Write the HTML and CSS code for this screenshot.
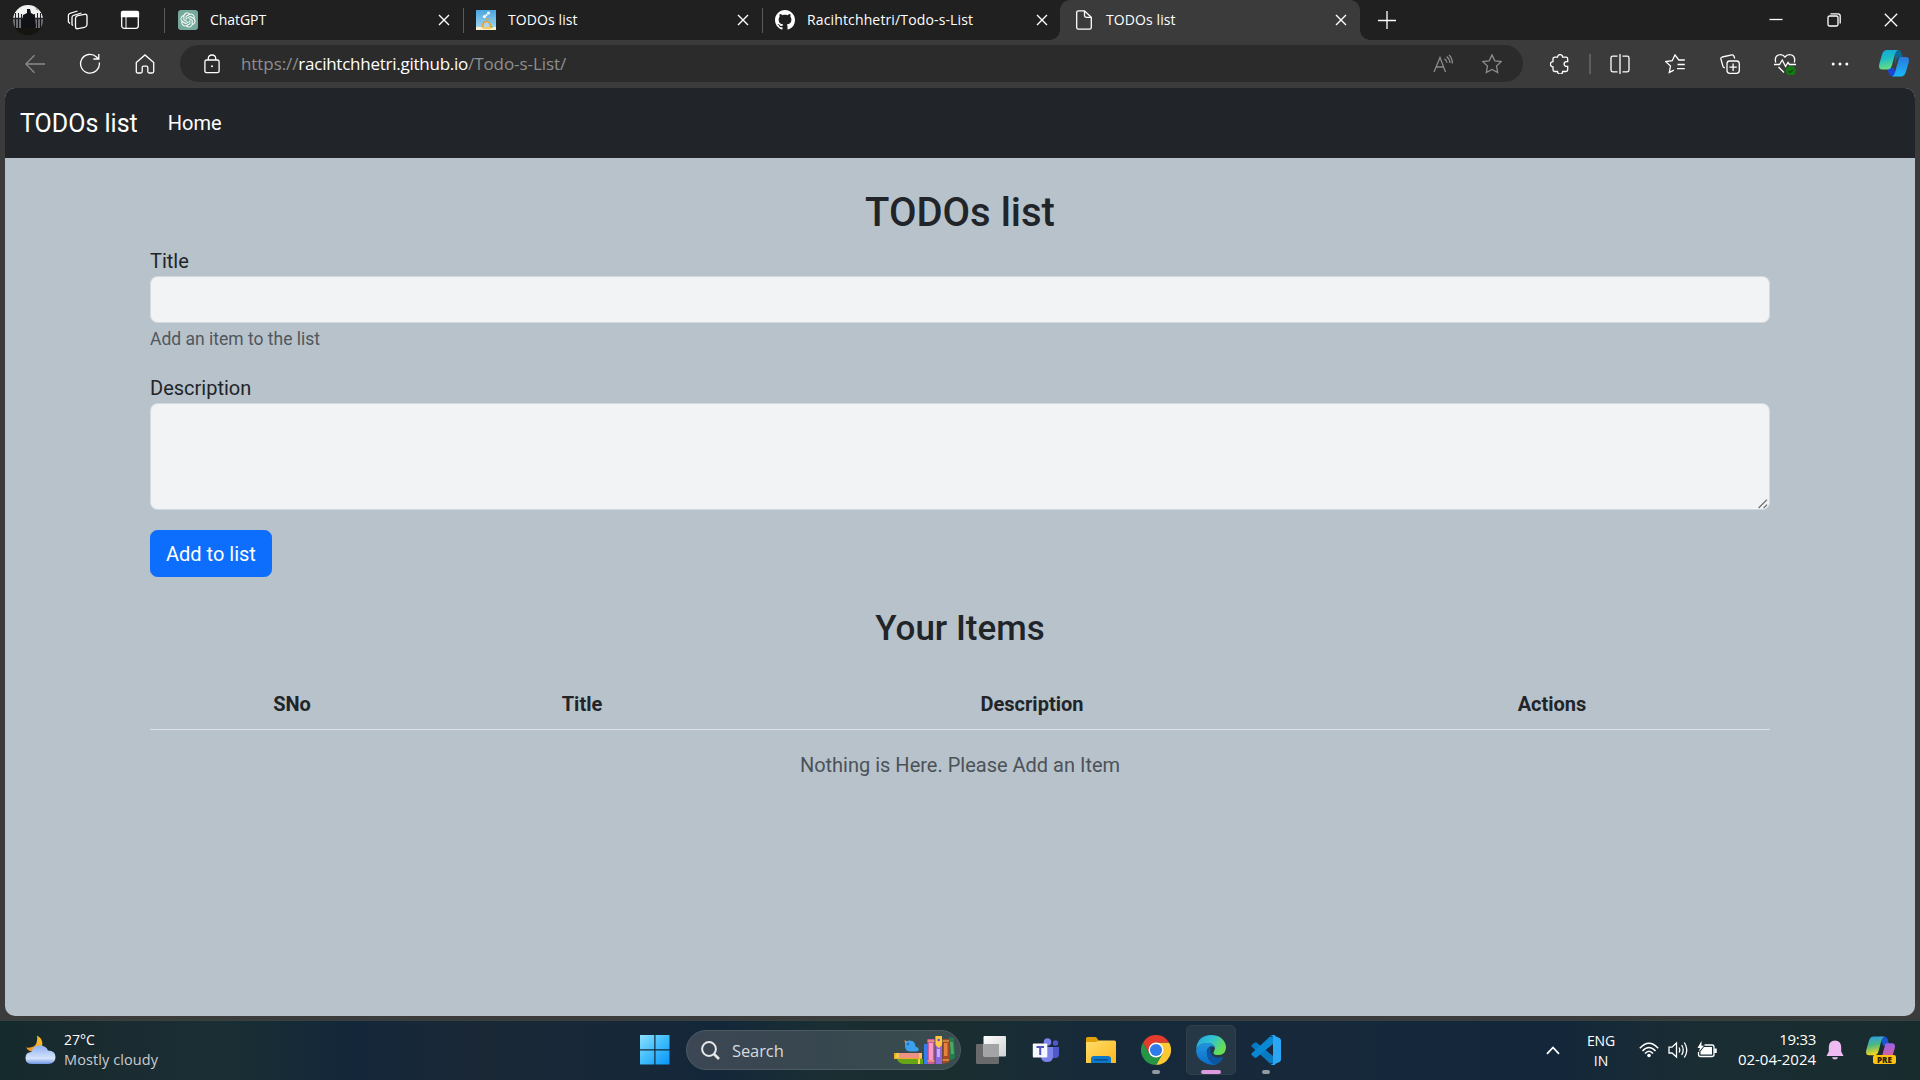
FILE: index.html
```html
<!DOCTYPE html>
<html lang="en">
<head>
<meta charset="utf-8">
<title>TODOs list</title>
<link rel="stylesheet" href="styles.css">
</head>
<body>
<div class="screen">
  <header class="tabstrip">
    <div class="strip-tools">
      <svg class="avatar" width="30" height="30" viewBox="0 0 30 30">
        <defs><clipPath id="av"><circle cx="15" cy="15" r="15"/></clipPath></defs>
        <g clip-path="url(#av)">
          <rect width="30" height="30" fill="#15151a"/>
          <rect width="30" height="13" fill="#f1f3f2"/>
          <path d="M1 13v10M4 13v10M7 13v10M23 13v10M26 13v10M29 13v10" stroke="#b9b9bf" stroke-width="1.1"/>
          <path d="M2.500 8v6M5.500 8v6M8.500 9v5M21.500 9v5M24.500 8v6M27.500 8v6" stroke="#24242a" stroke-width="1.1"/>
          <path d="M0 13.500h11M20 13.500h10" stroke="#24242a" stroke-width="1.400"/>
          <path d="M22 1l2 4 2-1" stroke="#9b9b93" fill="none"/>
          <path d="M14 4h3l1 4 3.500 2 1.500 11-3 9H10L9 19l1-9 4-2z" fill="#101117"/>
          <path d="M2 23h26v7H2z" fill="#15140f"/>
        </g>
      </svg>
      <svg class="i" width="22" height="22" viewBox="0 0 22 22"><rect x="8.500" y="6" width="11.500" height="13" rx="2.500" transform="skewY(-12) translate(0 3)"/><path d="M6 16.500l-1-.8V8.500q0-1.800 1.600-2.200L14.500 4M3 14.500l-1.600-1.600V6.500q0-1.800 1.600-2.200L10.500 2"/></svg>
      <svg class="i" width="20" height="20" viewBox="0 0 20 20"><rect x="1.700" y="1.700" width="16.600" height="16.600" rx="2.500"/><path d="M1.500 2.500q0-1 1.500-1h14q1.500 0 1.500 1V6.500h-17z" fill="#fff"/><path d="M6 6v12" stroke-width="1"/></svg>
    </div>
    <div class="tab first">
      <svg width="20" height="20" viewBox="0 0 20 20"><rect width="20" height="20" rx="3" fill="#74a99b"/><path transform="translate(2.400 2.400) scale(.633)" fill="#fff" d="M22.282 9.821a5.985 5.985 0 0 0-.516-4.910 6.046 6.046 0 0 0-6.510-2.900A6.065 6.065 0 0 0 4.981 4.182a5.985 5.985 0 0 0-3.998 2.900 6.046 6.046 0 0 0 .743 7.097 5.980 5.980 0 0 0 .51 4.911 6.051 6.051 0 0 0 6.515 2.900A5.985 5.985 0 0 0 13.260 24a6.056 6.056 0 0 0 5.772-4.206 5.990 5.990 0 0 0 3.998-2.900 6.056 6.056 0 0 0-.748-7.073zM13.260 22.430a4.476 4.476 0 0 1-2.876-1.040l.141-.081 4.779-2.758a.795.795 0 0 0 .393-.681v-6.737l2.020 1.168a.071.071 0 0 1 .038.052v5.583a4.504 4.504 0 0 1-4.495 4.494zM3.600 18.304a4.470 4.470 0 0 1-.535-3.014l.142.085 4.783 2.759a.771.771 0 0 0 .780 0l5.843-3.369v2.332a.080.080 0 0 1-.033.062L9.740 19.950a4.500 4.500 0 0 1-6.140-1.646zM2.340 7.896a4.485 4.485 0 0 1 2.366-1.973V11.600a.766.766 0 0 0 .388.676l5.815 3.355-2.020 1.168a.076.076 0 0 1-.071 0l-4.830-2.786A4.504 4.504 0 0 1 2.340 7.872zm16.597 3.855l-5.833-3.387L15.119 7.200a.076.076 0 0 1 .071 0l4.830 2.791a4.494 4.494 0 0 1-.676 8.105v-5.678a.790.790 0 0 0-.407-.667zm2.010-3.023l-.141-.085-4.774-2.782a.776.776 0 0 0-.785 0L9.409 9.230V6.897a.066.066 0 0 1 .028-.061l4.830-2.787a4.500 4.500 0 0 1 6.680 4.660zm-12.640 4.135l-2.020-1.164a.080.080 0 0 1-.038-.057V6.075a4.500 4.500 0 0 1 7.375-3.453l-.142.080L8.704 5.460a.795.795 0 0 0-.393.681zm1.097-2.365l2.602-1.500 2.607 1.500v2.999l-2.597 1.500-2.607-1.500z"/></svg>
      <span class="tab-title t-gpt">ChatGPT</span>
      <svg class="x" width="12" height="12" viewBox="0 0 12 12"><path d="M1 1l10 10M11 1L1 11"/></svg>
    </div>
    <div class="tab">
      <svg width="20" height="20" viewBox="0 0 20 20"><defs><linearGradient id="sky" x2="0" y2="1"><stop stop-color="#4aa5de"/><stop offset="1" stop-color="#a4dcf4"/></linearGradient></defs><rect width="20" height="20" fill="url(#sky)"/><rect y="17" width="20" height="3" fill="#fbeecb"/><path d="M6.500 17.500q0-6 4-6t4 6" fill="#a9d8e8" stroke="#f39a2d" stroke-width="1.500"/><path d="M7 18h8" stroke="#f4ca45" stroke-width="1.600"/><path d="M9 9h3.500" stroke="#f39a2d" stroke-width="1.200"/><circle cx="8.500" cy="6.500" r="1.600" fill="#fff"/><circle cx="12.500" cy="3" r="1.500" fill="#fff"/><circle cx="10.500" cy="5" r="1" fill="#fff"/><path d="M2.500 11.500l1.500 1M16.500 10.500l1.500.8" stroke="#f2a75e"/><path d="M15.800 16v2" stroke="#43c5a5" stroke-width="1.200"/></svg>
      <span class="tab-title t-todo">TODOs list</span>
      <svg class="x" width="12" height="12" viewBox="0 0 12 12"><path d="M1 1l10 10M11 1L1 11"/></svg>
    </div>
    <div class="tab">
      <svg width="20" height="20" viewBox="0 0 16 16"><path fill="#fff" d="M8 0C3.580 0 0 3.580 0 8c0 3.540 2.290 6.530 5.470 7.590.4.070.55-.17.55-.38 0-.19-.01-.82-.01-1.490-2.010.37-2.530-.49-2.690-.94-.09-.23-.48-.94-.82-1.130-.28-.15-.68-.52-.01-.53.63-.01 1.080.58 1.230.82.72 1.210 1.870.87 2.330.66.07-.52.28-.87.51-1.070-1.780-.2-3.640-.89-3.640-3.950 0-.87.31-1.590.82-2.150-.08-.2-.36-1.020.08-2.120 0 0 .67-.21 2.200.82.64-.18 1.320-.27 2-.27s1.360.09 2 .27c1.530-1.040 2.200-.82 2.200-.82.44 1.100.16 1.920.08 2.120.51.56.82 1.270.82 2.150 0 3.070-1.870 3.750-3.650 3.950.29.25.54.73.54 1.480 0 1.070-.01 1.930-.01 2.200 0 .21.15.46.55.38A8.010 8.010 0 0 0 16 8c0-4.420-3.580-8-8-8z"/></svg>
      <span class="tab-title t-git">Racihtchhetri/Todo-s-List</span>
      <svg class="x" width="12" height="12" viewBox="0 0 12 12"><path d="M1 1l10 10M11 1L1 11"/></svg>
    </div>
    <div class="tab active">
      <svg class="i" width="20" height="20" viewBox="0 0 20 20"><path d="M10.500.8H4.500Q2.700.8 2.700 2.600v14.800q0 1.800 1.800 1.800h11q1.800 0 1.800-1.800V7.300zM10.500.8v4.700q0 1.800 1.800 1.800h5"/></svg>
      <span class="tab-title t-todo">TODOs list</span>
      <svg class="x" width="12" height="12" viewBox="0 0 12 12"><path d="M1 1l10 10M11 1L1 11"/></svg>
    </div>
    <svg class="i newtab" width="18" height="18" viewBox="0 0 18 18"><path d="M9 0v18M0 9.500h18"/></svg>
    <div class="window-controls">
      <svg class="i" width="14" height="14" viewBox="0 0 14 14"><path d="M.5 6.500h13"/></svg>
      <svg class="i" width="14" height="14" viewBox="0 0 14 14"><rect x="1" y="3" width="10" height="10" rx="1.500"/><path d="M3.500.8H11q2.200 0 2.200 2.200v7.500"/></svg>
      <svg class="i" width="14" height="14" viewBox="0 0 14 14"><path d="M.8.8l12.400 12.400M13.200.8L.8 13.200"/></svg>
    </div>
  </header>

  <div class="toolbar">
    <div class="slot"><svg class="i dim" width="20" height="20" viewBox="0 0 20 20"><path d="M20 10H.8M9.500 1.200L.8 10l8.700 8.800"/></svg></div>
    <div class="slot"><svg class="i" width="22" height="22" viewBox="0 0 22 22"><path d="M20.300 9.500A9.400 9.400 0 1 1 17.500 4l1.800 1.800M19.800 1v5h-5.500"/></svg></div>
    <div class="slot"><svg class="i" width="20" height="20" viewBox="0 0 20 20"><path d="M1.300 8.500L10 .9l8.700 7.600v9q0 1.500-1.500 1.500h-3q-1.400 0-1.400-1.500v-4q0-1.400-1.400-1.400H8.600q-1.400 0-1.400 1.400v4q0 1.500-1.400 1.500h-3q-1.500 0-1.500-1.500z"/></svg></div>
    <div class="address">
      <svg class="i" width="16" height="20" viewBox="0 0 16 20"><rect x=".9" y="6" width="14.200" height="12.700" rx="1.800"/><path d="M4.300 6V4.500Q4.300 1 8 1t3.700 3.500V6"/><circle cx="8" cy="12.300" r="1" fill="#fff" stroke="none"/></svg>
      <span class="url">https://<b>racihtchhetri.github.io</b>/Todo-s-List/</span>
      <svg class="i dim" width="20" height="20" viewBox="0 0 20 20"><path d="M1 18L7 3.500 12.500 18M3 13h7.700M11.500 4.800q2.300 1.700 2.500 4M13.700 2.500q3.200 2.700 3.200 6.500M16 .9q3.500 3.500 3.300 8.600"/></svg>
      <svg class="i dim" width="20" height="20" viewBox="0 0 20 20"><path d="M10 .9l2.800 5.900 6.400.8-4.700 4.500 1.200 6.500L10 15.400l-5.700 3.200 1.200-6.500L.8 7.600l6.400-.8z"/></svg>
    </div>
    <div class="slot ext"><svg class="i" width="20" height="20" viewBox="0 0 20 20"><path d="M4.700 3.200h2.800a2.600 2.600 0 0 1 5.200 0h3.300q1.700 0 1.700 1.700v2.700h-1.200a2.400 2.400 0 0 0 0 4.800h1.200v3.400q0 1.700-1.700 1.700h-3.300a2.600 2.600 0 0 1-5.200 0H4.700Q3 17.500 3 15.800v-2.900a2.600 2.600 0 0 1 0-5.200V4.900q0-1.700 1.700-1.700z"/></svg></div>
    <i class="rule"></i>
    <div class="slot"><svg class="i" width="20" height="20" viewBox="0 0 20 20"><path d="M10 0v20M7.500 2.200H2.700q-1.700 0-1.700 1.700v12.200q0 1.700 1.700 1.700h4.800M12.500 2.200h4.800q1.700 0 1.700 1.700v12.200q0 1.700-1.700 1.700h-4.800"/></svg></div>
    <div class="slot"><svg class="i" width="20" height="20" viewBox="0 0 20 20"><path d="M19.800 6h-6L10 .9 7.200 6.700.8 7.600l4.700 4.500-1.200 6.500 4.500-2.500M12.500 10.500h7.300M12 14.700h7.800"/></svg></div>
    <div class="slot"><svg class="i" width="20" height="20" viewBox="0 0 20 20"><rect x="7" y="7" width="12.300" height="12.300" rx="2.800"/><path d="M13.100 9.500v7.400M9.400 13.200h7.400M14.700 4.500l-.7-2.300q-.5-1.600-2.100-1.300L2.200 3Q.5 3.500.9 5l2 7.200q.4 1.600 2 1.300"/></svg></div>
    <div class="slot"><svg class="i" width="22" height="22" viewBox="0 0 22 22"><path d="M1.700 9.500Q.2 3.500 4.300 2T11 4q2.600-3.500 6.700-2t2.600 7.500M0 11.500h5.500L8.300 7l3.200 6.500L14 9.500l1.500 2H22M4.500 14l5.500 5.500"/><circle cx="16.800" cy="18" r="5" fill="#107c10" stroke="none"/><path d="M14.600 18l1.500 1.500 3-3" stroke="#24401f"/></svg></div>
    <div class="slot"><svg width="18" height="4" viewBox="0 0 18 4"><g fill="#fff"><circle cx="2.200" cy="2" r="1.500"/><circle cx="9" cy="2" r="1.500"/><circle cx="15.800" cy="2" r="1.500"/></g></svg></div>
    <div class="slot copilot">
      <svg width="30" height="27" viewBox="0 0 30 27"><defs><linearGradient id="ca" x2=".2" y2="1"><stop stop-color="#12a6d8"/><stop offset=".5" stop-color="#20bdc4"/><stop offset="1" stop-color="#66dd83"/></linearGradient><linearGradient id="cb" x2="0" y2="1"><stop stop-color="#2a78dc"/><stop offset="1" stop-color="#18b9fb"/></linearGradient></defs><path d="M16 0h3q2.500 0 3.500 3l1.300 4q-4-1-6 2l-2 6z" fill="#0b6a95"/><path d="M8 18h7l2 8h-4q-2.500 0-3.300-3z" fill="#1a44d8"/><path d="M8 0h11q-2 .5-3 4l-3 11q-1.200 4.500-4.500 4.500H3Q-.8 19.500.3 14L3 4.500Q4.300 0 8 0z" fill="url(#ca)"/><path d="M21 7h6q3.800 0 2.700 5.500L27 21.500Q25.500 26.500 22 26.500H13q2-.5 3-4l3-11Q20 7 21 7z" fill="url(#cb)"/></svg>
    </div>
  </div>

  <main class="page">
    <nav class="navbar"><span class="brand">TODOs list</span><span class="link">Home</span></nav>
    <div class="container">
      <h2>TODOs list</h2>
      <form>
        <label for="title">Title</label>
        <input id="title" class="control" type="text">
        <div class="help">Add an item to the list</div>
        <label for="description">Description</label>
        <div class="area-wrap">
          <textarea id="description" class="control area"></textarea>
          <svg class="grip" width="10" height="10" viewBox="0 0 10 10"><path d="M.6 9L9 .6M5.600 9L9 5.600" fill="none" stroke="#6d6f71" stroke-width="1.300"/></svg>
        </div>
        <button type="button">Add to list</button>
      </form>
      <h3>Your Items</h3>
      <div class="thead"><span>SNo</span><span>Title</span><span>Description</span><span>Actions</span></div>
      <p class="empty">Nothing is Here. Please Add an Item</p>
    </div>
  </main>

  <footer class="taskbar">
    <div class="weather">
      <svg width="31" height="30" viewBox="0 0 31 30"><defs><linearGradient id="mo" x1="1" x2="0" y2="1"><stop stop-color="#fbc72e"/><stop offset="1" stop-color="#f18a1c"/></linearGradient><linearGradient id="cl" x2="0" y2="1"><stop stop-color="#8db1f2"/><stop offset=".7" stop-color="#d5e3fb"/><stop offset="1" stop-color="#6d94e2"/></linearGradient></defs><path d="M12 .5q7 4 5 11-3 7-11 5-3.500-1-5-4 8.500 1 10.500-4.500 1.300-4 .5-7.500z" fill="url(#mo)"/><path d="M7 29Q.5 29 .5 23T6.500 17Q8 10.500 14.500 10.500T23 15.500q7.500 0 7.500 6.500T23 29z" fill="url(#cl)"/></svg>
      <div class="weather-text"><span class="deg">27°C</span><span class="sky">Mostly cloudy</span></div>
    </div>

    <div class="apps">
      <svg class="start" width="30" height="30" viewBox="0 0 30 30"><defs><linearGradient id="wi" x2="1" y2="1"><stop stop-color="#8be0ff"/><stop offset=".5" stop-color="#3fbcfb"/><stop offset="1" stop-color="#0795fa"/></linearGradient></defs><path fill="url(#wi)" d="M0 0h14.300v14.300H0zM15.500 0H29.500v14.300H15.500zM0 15.500h14.300V29.500H0zM15.500 15.500H29.500V29.500H15.500z"/></svg>
      <div class="search">
        <svg width="19" height="19" viewBox="0 0 19 19" fill="none" stroke="#e6e8ea" stroke-width="2"><circle cx="8" cy="8" r="6.900"/><path d="M13 13l5 5" stroke-width="2.600"/></svg>
        <span class="search-text">Search</span>
        <svg width="62" height="30" viewBox="0 0 62 30"><path d="M0 18h28v6H0z" fill="#e9a92c"/><path d="M2 18h26v5H1z" fill="#f3c94c"/><path d="M5 18h20v5H5z" fill="#ef9283"/><path d="M3 24h26v5H9Q4 28 3 24z" fill="#66a516"/><path d="M24 24h2v5h-2z" fill="#f4d648"/><path d="M10.500 5l4 2.500-3 2.500z" fill="#f6933a"/><path d="M11 11q0-5.500 5-5.500t5.500 6l3 1.500v3l-4.500.5h-4q-5-.5-5-5.500z" fill="#3aa0ed"/><circle cx="14" cy="9" r=".8" fill="#124"/><path d="M30 9h3.500v20H30z" fill="#377ce8"/><path d="M33.500 4h7v25h-7z" fill="#cf5b9f"/><path d="M35 8h4v17h-4z" fill="#f49ac3"/><path d="M33.500 6h7M33.500 26h7" stroke="#f8c456"/><path d="M41.500 1H48v28h-6.500z" fill="#8f67db"/><path d="M41.500 1H48v9l-3 3-3.500-3z" fill="#ffc845"/><circle cx="44.700" cy="5" r="1.300" fill="#675cb0"/><path d="M43 14h3v8h-3z" fill="#c7adf4"/><path d="M48.500 4H55v23l-6.500 2z" fill="#a94722"/><path d="M50 8h3.500v13H50z" fill="#e7813e"/><path d="M48.500 6H55M48.500 25H55" stroke="#f4c04f"/><path d="M55 2l5 1 1 20-6 3z" fill="#237c4f"/><path d="M56 7h3l1 12h-3z" fill="#4fa665"/></svg>
      </div>
      <div class="app"><svg width="30" height="28" viewBox="0 0 30 28"><defs><linearGradient id="tv" x2="1" y2="1"><stop stop-color="#fff"/><stop offset="1" stop-color="#cfd0d1"/></linearGradient></defs><rect y="8" width="23" height="20" rx="1" fill="#696a6b"/><rect x="7.500" width="22.500" height="20.500" rx="1" fill="url(#tv)"/><path d="M7.500 8H23v12.500H7.500z" fill="#a3a4a5"/></svg></div>
      <div class="app"><svg width="28" height="24" viewBox="0 0 28 24"><circle cx="15.500" cy="4" r="3.800" fill="#7b83eb"/><circle cx="23.500" cy="5" r="2.700" fill="#5059c9"/><path d="M20 9h7v7q0 4-4 4h-3z" fill="#5059c9"/><path d="M10 9h11v9q0 6-6 6t-6-6z" fill="#7b83eb"/><rect x=".8" y="5.500" width="14.500" height="14" rx="1" fill="#f7f7ff"/><path d="M4.500 9h7.500M8.200 9v8" stroke="#4b53bc" stroke-width="2"/></svg></div>
      <div class="app"><svg width="30" height="28" viewBox="0 0 30 28"><defs><linearGradient id="fo" x2="1" y2="1"><stop stop-color="#ffdc68"/><stop offset="1" stop-color="#fbb91f"/></linearGradient></defs><path d="M0 2.500Q0 1 1.500 1H9q1 0 1.700.8L13 5v5H0z" fill="#e2a10b"/><path d="M0 6h10l3-1.500H28.500q1.500 0 1.500 1.500V27H0z" fill="url(#fo)"/><path d="M5 27v-4q0-3 3-3h14q3 0 3 3v4z" fill="#0b78ca"/><path d="M8.500 23.800h13" stroke="#064b85" stroke-width="1.400"/></svg></div>
      <div class="app"><svg width="30" height="30" viewBox="0 0 48 48"><path d="M24 12h20.800A24 24 0 0 1 24 48L34.400 30z" fill="#fcc934"/><path d="M3.200 12A24 24 0 0 0 24 48l10.400-18H13.600z" fill="#269546"/><path d="M3.200 12A24 24 0 0 1 44.800 12H24L13.600 30z" fill="#e33b2e"/><circle cx="24" cy="24" r="12" fill="#fff"/><circle cx="24" cy="24" r="9.700" fill="#2f7bec"/></svg><i class="dot"></i></div>
      <div class="app current"><svg width="30" height="30" viewBox="0 0 30 30"><defs><linearGradient id="e1" x2="1" y2=".5"><stop stop-color="#249fe0"/><stop offset=".5" stop-color="#30c3d3"/><stop offset="1" stop-color="#69df50"/></linearGradient><linearGradient id="e2" x2="0" y2="1"><stop stop-color="#2195e0"/><stop offset="1" stop-color="#0b6cc8"/></linearGradient></defs><path d="M.2 14Q1.500 0 15.500 0 24 0 28 6q2.600 4 1.800 8-1 6-7.800 6-5 0-4.500-2.500l1.500-4Q19 9 12.500 8 4 7.500.2 14z" fill="url(#e1)"/><path d="M.1 15Q3 8 11 8q7 0 8 5-2-2.500-5-1.500-4 2-3 8 1.500 7 10 10Q13 31 7.500 27 0 23 .1 15z" fill="url(#e2)"/><path d="M11 18q0-5 4-7-1.500 3 0 7 2 5 8.500 4.500 2 0 4-1-2.500 7-8.500 8Q11 27 11 18z" fill="#0d559f"/></svg><i class="dot wide"></i></div>
      <div class="app"><svg width="30" height="30" viewBox="0 0 30 30"><path d="M22 21L5.500 7.500Q4.500 7 3.500 7.800L.8 9.900q-1 .9 0 1.800L19 28.500l3-.5z" fill="#087ac4"/><path d="M22 9L5.500 22.500q-1 .6-2 0L.8 20q-1-.9 0-1.800L19 1.500l3 .5z" fill="#0b88d4"/><path d="M22 0l6.500 3Q30 3.800 30 5.500v19q0 1.700-1.500 2.500L22 30q-1.500.6-3-1 3 1.500 3-2V3q0-3.500-3-2 1.500-1.600 3-1z" fill="#2ba6f3"/><path d="M22 0h2v30h-2z" fill="#2ba6f3"/></svg><i class="dot"></i></div>
    </div>

    <div class="tray">
      <svg class="chev" width="14" height="9" viewBox="0 0 14 9"><path d="M1 7.800L7 1.500l6 6.300" fill="none" stroke="#fff" stroke-width="1.800"/></svg>
      <div class="lang"><span>ENG</span><span>IN</span></div>
      <svg class="i" width="20" height="16" viewBox="0 0 20 16"><path d="M.8 6.200Q10-3.800 19.200 6.200M3.500 9q6.500-7 13 0M6 11.500q4-4.500 8 0" stroke-width="1.500"/><circle cx="10" cy="13.500" r="1.800" fill="#fff" stroke="none"/></svg>
      <svg class="i" width="20" height="18" viewBox="0 0 20 18"><path d="M1 6.200h3L8.500 2v14L4 12H1zM11 6.500q1.600 2.500 0 5M13.700 4q3 5 0 10M16.300 1.500q5 7.500 0 15"/></svg>
      <svg class="i" width="21" height="18" viewBox="0 0 21 18"><path d="M7.500 4H15q2 0 2 2v7.500q0 2-2 2H3.500q-2 0-2-2V11"/><path d="M7 6h8v7.500H3.500V10.500z" fill="#fff" stroke="none"/><path d="M18.500 7.500v4.500" stroke-width="2.500"/><path d="M4.500 0L.5 7H3L1.700 11 7 4.800H4.500z" fill="#fff" stroke="none"/></svg>
      <div class="clock"><span class="time">19:33</span><span class="date">02-04-2024</span></div>
      <svg class="bell" width="18" height="20" viewBox="0 0 18 20"><path d="M9 .5q6 .3 6.200 6.500v4.500L17.500 16H.5l2.300-4.500V7Q3 .8 9 .5zM6 17.300h6Q11.500 19.500 9 19.500T6 17.300z" fill="#f0bbf3"/></svg>
      <div class="pre">
        <svg width="29" height="27" viewBox="0 0 30 27"><defs><linearGradient id="p1" x2=".2" y2="1"><stop stop-color="#2a9cf0"/><stop offset=".5" stop-color="#4bb883"/><stop offset="1" stop-color="#f3d61c"/></linearGradient><linearGradient id="p2" x2="0" y2="1"><stop stop-color="#9a62e8"/><stop offset="1" stop-color="#f2607c"/></linearGradient></defs><path d="M14 0h5q2.500 0 3.500 3l1.300 5-6 2z" fill="#1c55d0"/><path d="M8 0h11q-2 .5-3 4l-3 11q-1.200 4.500-4.500 4.500H3Q-.8 19.500.3 14L3 4.500Q4.300 0 8 0z" fill="url(#p1)"/><path d="M21 7h6q3.800 0 2.700 5.500L27 21.500Q25.500 26.500 22 26.500H13q2-.5 3-4l3-11Q20 7 21 7z" fill="url(#p2)"/></svg>
        <span class="badge">PRE</span>
      </div>
    </div>
  </footer>
</div>
</body>
</html>
```
FILE: styles.css
```css
* { box-sizing: border-box; }
body { margin: 0; background: #3b3b3b; overflow: hidden; }
svg { display: block; flex: none; }
.screen {
  width: 1920px; height: 1080px;
  display: flex; flex-direction: column;
  font-family: "Open Sans", "Noto Sans", sans-serif;
  font-size: 14px; color: #fff; background: #3b3b3b;
}
.i { fill: none; stroke: #fff; stroke-width: 1.3; }
.dim { stroke: #8b8b8b; }

/* tab strip */
.tabstrip { height: 40px; flex: none; display: flex; align-items: center; background: #202020; }
.strip-tools { width: 164px; padding-left: 13px; display: flex; align-items: center; }
.strip-tools svg + svg { margin-left: 24px; }
.strip-tools svg:last-child { margin-left: 31px; }
.tab {
  width: 299px; height: 40px; padding: 0 13px 0 13px;
  display: flex; align-items: center; gap: 12px;
  background: linear-gradient(#5b5b5b, #5b5b5b) 0 8px / 1px 25px no-repeat;
}
.first { padding-left: 14px; }
.tab-title { flex: 1; line-height: 20px; white-space: nowrap; }
.t-gpt { letter-spacing: -.05px; }
.t-todo { letter-spacing: .1px; }
.t-git { letter-spacing: .14px; }
.x { fill: none; stroke: #fff; stroke-width: 1.4; }
.active {
  position: relative; width: 300px; margin-left: -1px; padding-left: 14px;
  background: #3b3b3b; border-radius: 10px 10px 0 0;
}
.active::before, .active::after { content: ""; position: absolute; bottom: 0; width: 10px; height: 10px; }
.active::before { left: -10px; background: radial-gradient(circle at 0 0, #202020 9.5px, #3b3b3b 10px); }
.active::after { right: -10px; background: radial-gradient(circle at 100% 0, #202020 9.5px, #3b3b3b 10px); }
.newtab { margin-left: 18px; }
.window-controls { margin-left: auto; margin-right: 22px; display: flex; gap: 43.500px; }

/* toolbar */
.toolbar { height: 48px; flex: none; padding: 0 0 1px 7px; display: flex; align-items: center; background: #3b3b3b; }
.slot { width: 55px; display: flex; justify-content: center; }
.address {
  width: 1343px; height: 37px; margin-left: 8px; padding: 0 21px 0 24px;
  display: flex; align-items: center; background: #2b2b2b; border-radius: 19px;
}
.address svg:first-child { margin-right: 21px; }
.address .url + svg { margin-right: 29px; }
.url { flex: 1; font-size: 17px; letter-spacing: -.08px; line-height: 24px; color: #8f8f8f; }
.url b { font-weight: 400; letter-spacing: -.25px; color: #fff; }
.ext { width: 54px; margin-left: 10px; }
.rule { width: 2px; height: 20px; margin: 0 1px 0 2px; background: #5d5d5d; }
.copilot { width: 53px; }

/* page */
.page {
  width: 1910px; height: 928px; margin: 0 5px; flex: none; overflow: hidden;
  border-radius: 10px; background: #b8c2cb; color: #212529;
  font-family: Roboto, sans-serif; font-size: 20px; line-height: 30px;
}
.navbar { height: 70px; padding-left: 15px; display: flex; align-items: center; background: #212529; color: #fff; }
.brand { font-size: 25px; padding-top: 1px; }
.link { margin-left: 30px; }
.container { width: 1620px; margin: 0 auto; }
h2, h3 { font-weight: 500; line-height: 1.2; text-align: center; }
h2 { margin: 31px 0 9px; font-size: 40px; }
h3 { margin: 31px 0 29px; font-size: 35px; }
label { display: block; }
.control {
  display: block; width: 100%; height: 47px; padding: 8px 15px;
  background: #f1f3f5; border: 1px solid #d2dae1; border-radius: 7.500px;
  font: inherit; outline: none;
}
.area-wrap { position: relative; margin-bottom: 20px; }
.area { height: 107px; resize: none; }
.grip { position: absolute; right: 2px; bottom: 1px; }
.help { margin: 3px 0 21px; font-size: 17.500px; line-height: 26px; color: #50575d; }
button {
  display: block; height: 47px; padding: 0 15px; border: 1px solid #0d6efd; border-radius: 7.500px;
  background: #0d6efd; color: #fff; font: inherit;
}
.thead {
  display: grid; grid-template-columns: 284px 296px 604px 436px;
  padding: 10px 0; text-align: center; font-weight: 700; border-bottom: 1px solid #dee2e6;
}
.empty { margin: 20px 0 0; text-align: center; color: #4b5258; }

/* taskbar */
.taskbar {
  height: 60px; margin-top: 4px; padding-bottom: 1px; flex: none;
  display: flex; align-items: center; border-top: 1px solid #34413f;
  background: linear-gradient(90deg, #152a2d 0, #1a2b30 90px, #1a2e33 220px, #14273a 350px, #1a2836 480px, #14273a 720px, #1a2e33 820px, #1a2e30 960px, #172a3a 1080px, #16283a 1320px, #14273a 1560px, #1a2d33 1700px, #182b2d 1920px);
}
.weather { width: 640px; padding-left: 25px; display: flex; align-items: center; gap: 8px; }
.weather-text { display: flex; flex-direction: column; line-height: 20px; }
.deg { letter-spacing: 0; }
.sky { color: #c9cdd0; font-size: 14.500px; letter-spacing: .1px; }
.apps { display: flex; align-items: center; }
.search {
  width: 275px; height: 40px; margin: 0 2px 0 16px; padding: 0 4px 0 14px;
  display: flex; align-items: center; gap: 12px; overflow: hidden;
  border: 1px solid #4e5a63; border-radius: 20px;
  background: linear-gradient(90deg, #3c4654, #37474f 50%, #3b4d4f);
}
.search-text { flex: 1; font-size: 16.500px; letter-spacing: -.1px; color: #d7dadd; }
.app { position: relative; width: 50px; height: 50px; margin-left: 5px; display: flex; align-items: center; justify-content: center; }
.search + .app { margin-left: 3px; }
.current { background: #263745; border: 1px solid #2f404c; border-radius: 5px; }
.dot { position: absolute; bottom: 1px; width: 8px; height: 4px; border-radius: 2px; background: #929ba4; }
.wide { width: 20px; bottom: 0; background: #dc9be0; }
.tray { margin-left: auto; display: flex; align-items: center; line-height: 20px; }
.chev { margin-right: 25px; }
.lang { width: 32px; margin-right: 22px; display: flex; flex-direction: column; align-items: center; letter-spacing: -.1px; padding-top: 1px; }
.tray .i + .i { margin-left: 9px; }
.clock { width: 98px; padding-bottom: 2px; display: flex; flex-direction: column; align-items: flex-end; font-size: 15px; }
.time { letter-spacing: -.3px; }
.date { letter-spacing: -.02px; }
.bell { margin: 0 22px 0 10px; }
.pre { position: relative; width: 30px; height: 28px; margin-right: 24px; }
.badge {
  position: absolute; left: 7px; top: 19px; width: 23px; height: 9px; border-radius: 2px;
  background: #ffc20e; color: #2a2200; font-size: 8px; font-weight: 800; line-height: 9px; text-align: center;
}
```
